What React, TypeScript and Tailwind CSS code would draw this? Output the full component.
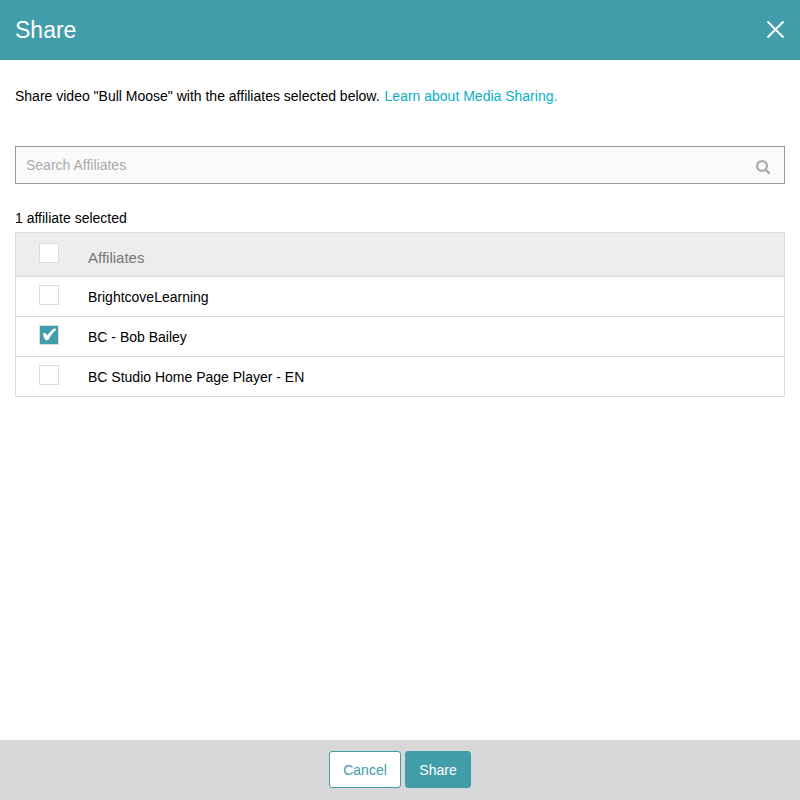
import { useState } from "react";

const affiliates = ["BrightcoveLearning", "BC - Bob Bailey", "BC Studio Home Page Player - EN"];

function Check({ label, checked, onChange }: { label: string; checked: boolean; onChange: () => void }) {
  return (
    <span className="relative block size-5">
      <input
        type="checkbox"
        aria-label={label}
        checked={checked}
        onChange={onChange}
        className="block size-5 appearance-none border border-[#dcdcdc] bg-white checked:bg-[#419daa]"
      />
      {checked && (
        <svg viewBox="0 0 20 20" className="pointer-events-none absolute inset-0 size-5" aria-hidden="true">
          <path d="M4 9C4.2 7.9 6.4 7.6 7 8.6L8.2 10.6C10.2 7.6 12.6 5 15.4 3.5C16.6 3 17.6 4.2 16.8 5.1C13.8 7.8 11.6 10.8 9.8 14.3C9 15.6 6.7 15.6 5.9 14.3C5 12.6 4.4 10.8 4 9Z" fill="#fff" />
        </svg>
      )}
    </span>
  );
}

export default function App() {
  const [selected, setSelected] = useState<string[]>(["BC - Bob Bailey"]);
  const all = selected.length === affiliates.length;
  const toggle = (name: string) =>
    setSelected((s) => (s.includes(name) ? s.filter((n) => n !== name) : [...s, name]));

  return (
    <div className="flex min-h-screen flex-col bg-white font-['Liberation_Sans',Arial,sans-serif] text-sm text-black">
      <header className="flex h-15 items-center justify-between bg-[#419daa] px-[15px] text-white">
        <h1 className="text-[23px]">Share</h1>
        <button type="button" aria-label="Close">
          <svg viewBox="0 0 18 18" className="size-[18px]" stroke="currentColor" strokeWidth="2" aria-hidden="true">
            <path d="M.5 .5 16.5 16.5M16.5 .5 .5 16.5" />
          </svg>
        </button>
      </header>

      <main className="flex-1 px-[15px] pt-[26px]">
        <p className="flex flex-wrap gap-x-[5px] leading-5">
          <span>Share video "Bull Moose" with the affiliates selected below.</span>
          <a href="#media-sharing" className="text-[#09b0c6]">Learn about Media Sharing.</a>
        </p>

        <label className="mt-10 flex h-[38px] items-center border border-[#999] bg-[#fafafa] px-2.5">
          <input
            type="search"
            aria-label="Search Affiliates"
            placeholder="Search Affiliates"
            className="min-w-0 flex-1 bg-transparent outline-none placeholder:text-[#aaa]"
          />
          <svg viewBox="0 0 14 14" className="mt-1 mr-1 size-3.5" fill="none" stroke="#aaa" strokeWidth="2.2" aria-hidden="true">
            <circle cx="6" cy="6" r="4.9" />
            <path d="m9.5 9.5 3.3 3.3" strokeLinecap="round" strokeWidth="2.4" />
          </svg>
        </label>

        <p className="mt-6 leading-5">{selected.length} affiliate selected</p>

        <table className="mt-1 w-full border-separate border-spacing-0 border-x border-t border-[#dcdcdc]">
          <thead>
            <tr className="h-11 bg-[#ededed] text-[15px] text-[#777]">
              <th className="w-18 border-b border-[#dcdcdc] pb-[3px] pl-[23px]">
                <Check label="Select all affiliates" checked={all} onChange={() => setSelected(all ? [] : affiliates)} />
              </th>
              <th className="border-b border-[#dcdcdc] pt-1.5 text-left font-normal">Affiliates</th>
            </tr>
          </thead>
          <tbody>
            {affiliates.map((name) => (
              <tr key={name} className="h-10">
                <td className="border-b border-[#dcdcdc] pb-[3px] pl-[23px]">
                  <Check label={name} checked={selected.includes(name)} onChange={() => toggle(name)} />
                </td>
                <td className="border-b border-[#dcdcdc] pt-px">{name}</td>
              </tr>
            ))}
          </tbody>
        </table>
      </main>

      <footer className="flex h-15 items-center justify-center gap-1 bg-[#d8d8d8] pb-0.5">
        <button type="button" className="h-[37px] w-18 rounded-[3px] border border-[#419daa] bg-white pt-0.5 text-[#419daa]">Cancel</button>
        <button type="button" className="h-[37px] w-[66px] rounded-[3px] border border-[#419daa] bg-[#419daa] pt-0.5 text-white">Share</button>
      </footer>
    </div>
  );
}
